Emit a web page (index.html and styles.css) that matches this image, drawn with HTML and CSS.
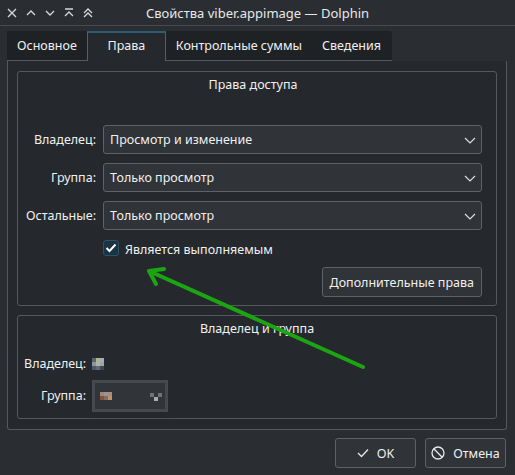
FILE: index.html
```html
<!DOCTYPE html>
<html lang="ru">
<head>
    <meta charset="UTF-8">
    <title>Свойства viber.appimage — Dolphin</title>
    <link rel="stylesheet" href="styles.css">
</head>
<body>

    <!-- Title bar -->
    <div class="titlebar">
        <div class="wm-buttons">
            <svg width="10" height="10" viewBox="0 0 10 10"><path d="M1 1 L9 9 M9 1 L1 9" /></svg>
            <svg width="10" height="10" viewBox="0 0 10 10"><path d="M1 7 L5 3 L9 7" /></svg>
            <svg width="10" height="10" viewBox="0 0 10 10"><path d="M1 3 L5 7 L9 3" /></svg>
            <svg width="10" height="10" viewBox="0 0 10 10"><path d="M1 1 L9 1 M1 8 L5 4 L9 8" /></svg>
            <svg width="10" height="10" viewBox="0 0 10 10"><path d="M1 5 L5 1 L9 5 M1 9 L5 5 L9 9" /></svg>
        </div>
        <div class="title">Свойства viber.appimage — Dolphin</div>
        <div></div>
    </div>

    <!-- Tabs -->
    <div class="tabs">
        <div class="tab">Основное</div>
        <div class="tab active">Права</div>
        <div class="tab">Контрольные суммы</div>
        <div class="tab last">Сведения</div>
    </div>

    <div class="panel">
        <!-- Access rights -->
        <div class="group access">
            <div class="group-title">Права доступа</div>
            <div class="form-grid">
                <label>Владелец:</label>
                <div class="combo">Просмотр и изменение<svg class="chevron" width="12" height="7" viewBox="0 0 12 7"><path d="M1 1 L6 6 L11 1" /></svg></div>
                <label>Группа:</label>
                <div class="combo">Только просмотр<svg class="chevron" width="12" height="7" viewBox="0 0 12 7"><path d="M1 1 L6 6 L11 1" /></svg></div>
                <label>Остальные:</label>
                <div class="combo">Только просмотр<svg class="chevron" width="12" height="7" viewBox="0 0 12 7"><path d="M1 1 L6 6 L11 1" /></svg></div>
                <div></div>
                <div class="check-row">
                    <span class="checkbox"><svg width="12" height="10" viewBox="0 0 12 10"><path d="M1.5 5 L4.5 8 L10.5 1.5" /></svg></span>
                    <span class="check-label">Является выполняемым</span>
                </div>
            </div>
            <div class="btn-row">
                <button type="button">Дополнительные права</button>
            </div>
        </div>

        <!-- Owner and group -->
        <div class="group owner">
            <div class="group-title">Владелец и группа</div>
            <div class="owner-grid">
                <label>Владелец:</label>
                <div class="pix pix-user">
                    <i style="background:#5c6470"></i><i style="background:#b5b28e"></i><i style="background:#a6aeb0"></i>
                    <i style="background:#8d949c"></i><i style="background:#aeb3b0"></i><i style="background:#98a6ae"></i>
                    <i style="background:#4a5a6c"></i><i style="background:#5c6a7a"></i><i style="background:#43474b"></i>
                </div>
                <label>Группа:</label>
                <div class="pix-combo-wrap">
                    <div class="pix-combo">
                        <div class="pix pix-group">
                            <i style="background:#a88468"></i><i style="background:#8a98a8"></i><i style="background:#b08c6c"></i>
                            <i style="background:#7a5440"></i><i style="background:#8a6a58"></i><i style="background:#b89474"></i>
                        </div>
                        <div class="pix pix-arrow">
                            <i style="background:#6e7276"></i><i></i><i style="background:#6e7276"></i>
                            <i></i><i style="background:#a8abae"></i><i></i>
                        </div>
                    </div>
                </div>
            </div>
        </div>
    </div>

    <!-- Dialog buttons -->
    <div class="dialog-buttons">
        <button type="button" class="dlg">
            <svg width="12" height="10" viewBox="0 0 12 10"><path d="M1 5 L4.5 8.5 L11 1.5" /></svg>
            OK
        </button>
        <button type="button" class="dlg">
            <svg width="14" height="14" viewBox="0 0 14 14"><circle cx="7" cy="7" r="6" /><path d="M2.8 2.8 L11.2 11.2" /></svg>
            Отмена
        </button>
    </div>

    <!-- Green arrow annotation drawn over the screenshot -->
    <svg class="annotation" width="515" height="475" viewBox="0 0 515 475">
        <path d="M363 367 L149 271 M149 271 L164 269 M149 271 L156 284" />
    </svg>

</body>
</html>
```

FILE: styles.css
```css
body {
    margin: 0;
    background: #2a2e32;
    color: #eff0f1;
    font-family: "Noto Sans", "DejaVu Sans", sans-serif;
    font-size: 12.5px;
    width: 515px;
    height: 475px;
    overflow: hidden;
    position: relative;
}
.titlebar {
    display: grid;
    grid-template-columns: 1fr auto 1fr;
    align-items: center;
    height: 26px;
    border-bottom: 1px solid #474b50;
    box-sizing: border-box;
    font-size: 13px;
}
.wm-buttons {
    display: flex;
    gap: 9px;
    padding-left: 7px;
}
.wm-buttons svg path {
    fill: none;
    stroke: #d6d8da;
    stroke-width: 1.3;
}
.title {
    color: #e6e8ea;
    padding-top: 1px;
}
/* Tabs */
.tabs {
    display: flex;
    margin: 5px 0 0 7px;
    height: 30px;
}
.tab {
    background: #1f2225;
    padding: 0 10px;
    line-height: 30px;
    box-sizing: border-box;
    height: 30px;
    border-bottom: 1px solid #55585c;
}
.tab.active {
    background: #25282c;
    border: 1px solid #5a5d61;
    border-top: 2px solid #2c5c78;
    border-bottom: none;
    width: 79px;
    text-align: center;
    line-height: 26px;
    padding: 0;
}
.tab.last {
    border-top-right-radius: 3px;
    padding-right: 11px;
}
.panel {
    margin: 0 8px 0 7px;
    height: 369px;
    box-sizing: border-box;
    background: #25282c;
    border: 1px solid #55585c;
    border-top: none;
    border-radius: 0 0 3px 3px;
    padding: 10px 9px 0 9px;
    display: flex;
    flex-direction: column;
    gap: 9px;
}
.group {
    border: 1px solid #55585c;
    border-radius: 3px;
    box-sizing: border-box;
}
.group-title {
    text-align: center;
    padding-top: 4px;
    height: 18px;
}
.access {
    height: 235px;
    padding: 0 14px 0 6px;
}
.form-grid {
    display: grid;
    grid-template-columns: 72px 1fr;
    column-gap: 7px;
    row-gap: 9px;
    align-items: center;
    margin-top: 31px;
}
.form-grid label {
    text-align: right;
}
.combo {
    height: 29px;
    box-sizing: border-box;
    background: #303337;
    border: 1px solid #5e6165;
    border-radius: 3px;
    display: flex;
    align-items: center;
    padding: 0 0 1px 6px;
    position: relative;
}
.chevron {
    position: absolute;
    right: 5px;
    top: 11px;
}
.chevron path {
    fill: none;
    stroke: #dcdee0;
    stroke-width: 1.2;
}
.check-row {
    display: flex;
    align-items: center;
    gap: 6px;
    height: 18px;
}
.check-label {
    padding-top: 2px;
}
.checkbox {
    width: 16px;
    height: 16px;
    box-sizing: border-box;
    background: #1b3444;
    border: 1px solid #2f5166;
    border-radius: 3px;
    display: flex;
    align-items: center;
    justify-content: center;
}
.checkbox path {
    fill: none;
    stroke: #ffffff;
    stroke-width: 2;
}
.btn-row {
    display: flex;
    justify-content: flex-end;
    margin-top: 10px;
}
button {
    font-family: inherit;
    font-size: 12.5px;
    color: #eff0f1;
    background: #303337;
    border: 1px solid #5e6165;
    border-radius: 3px;
    height: 30px;
    padding: 0 7px;
}
.owner {
    height: 104px;
    padding: 0 6px;
}
.owner-grid {
    display: grid;
    grid-template-columns: 62px auto;
    column-gap: 6px;
    row-gap: 0;
    align-items: center;
    margin-top: 16px;
}
.owner-grid label {
    text-align: right;
}
.pix {
    display: grid;
    grid-template-columns: repeat(3, 4px);
    grid-auto-rows: 4px;
}
.pix-user {
    height: 16px;
    align-content: center;
    margin-top: 2px;
}
.pix-combo-wrap {
    padding: 8px 0 6px 0;
    border-bottom: 1px solid #4f5256;
    width: 84px;
    margin-left: -2px;
}
.pix-combo {
    width: 76px;
    height: 32px;
    margin-left: 2px;
    box-sizing: border-box;
    background: #313438;
    border: 3px solid #46494d;
    display: flex;
    align-items: center;
    justify-content: space-between;
    padding: 0 3px 0 5px;
}
.pix-arrow {
    margin-top: 2px;
}
/* Bottom buttons */
.dialog-buttons {
    display: flex;
    justify-content: flex-end;
    gap: 9px;
    padding: 8px 9px 0 0;
}
.dlg {
    width: 81px;
    display: flex;
    align-items: center;
    justify-content: center;
    gap: 8px;
    padding: 0;
}
.dlg svg path, .dlg svg circle {
    fill: none;
    stroke: #e6e8ea;
    stroke-width: 1.3;
}
.annotation {
    position: absolute;
    left: 0;
    top: 0;
    pointer-events: none;
}
.annotation path {
    fill: none;
    stroke: #1ca512;
    stroke-width: 4;
    stroke-linecap: round;
    stroke-linejoin: round;
}
```
